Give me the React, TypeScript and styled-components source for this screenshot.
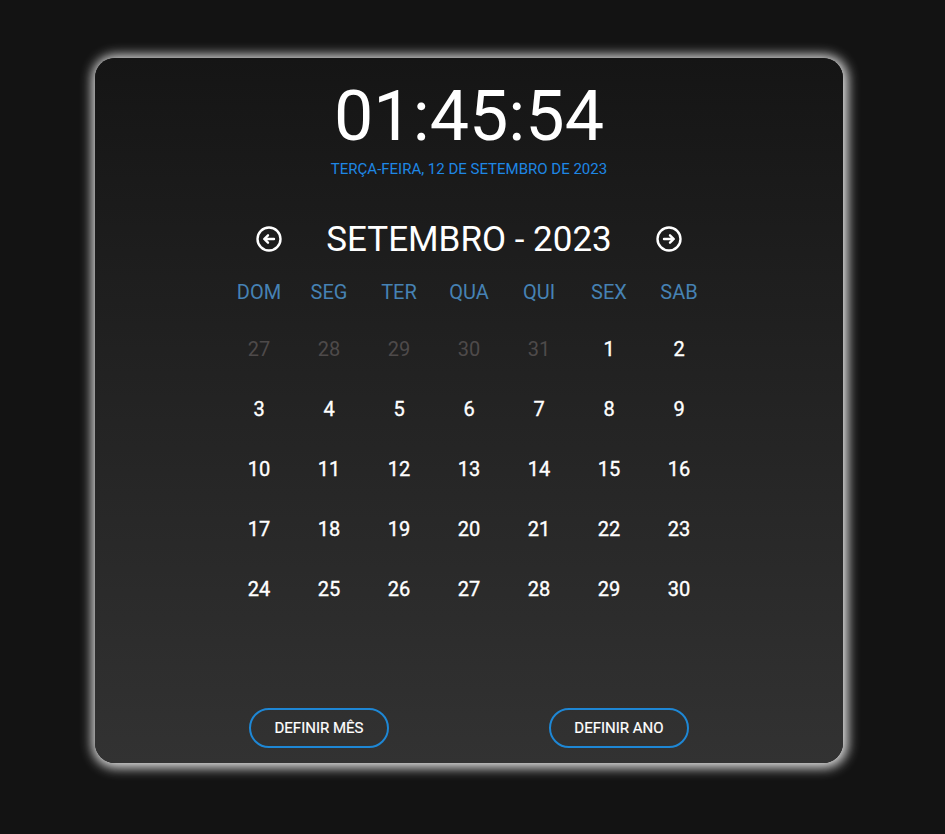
import React from 'react';
import styled, { createGlobalStyle } from 'styled-components';

const Global = createGlobalStyle`
  * { box-sizing: border-box; margin: 0; padding: 0; }
  body { background: #131313; font-family: Roboto, sans-serif; color: #fff; }
`;
const Page = styled.main`
  height: 834px;
  padding: 58px 102px 0 95px;
  overflow: hidden;
`;
const Card = styled.section`
  height: 705px;
  border-radius: 20px;
  background: linear-gradient(180deg, #151515, #323232);
  box-shadow: 1px 1px 12px 4px #ddd;
  display: flex;
  flex-direction: column;
  align-items: center;
`;
const Clock = styled.h1`
  margin-top: 16px;
  height: 84px;
  font-size: 70px;
  line-height: 84px;
  font-weight: 400;
`;
const Today = styled.p`
  margin-top: 1px;
  height: 20px;
  font-size: 15px;
  line-height: 20px;
  color: #1e87e5;
`;
const MonthBar = styled.header`
  margin-top: 40px;
  width: 428px;
  height: 40px;
  display: flex;
  align-items: center;
  justify-content: space-between;
`;
const MonthTitle = styled.h2`
  padding-top: 2px;
  font-size: 35px;
  line-height: 42px;
  font-weight: 400;
`;
const ArrowButton = styled.button`
  width: 28px;
  height: 28px;
  border: 0;
  background: none;
  color: #fff;
  display: flex;
`;
const Week = styled.div`
  margin-top: 18px;
  display: grid;
  grid-template-columns: repeat(7, 70px);
  height: 30px;
  line-height: 30px;
  font-size: 20px;
  text-align: center;
  color: #4682b4;
`;
const Days = styled.div`
  margin-top: 12px;
  display: grid;
  grid-template-columns: repeat(7, 70px);
  grid-auto-rows: 60px;
  place-items: center;
`;
const Day = styled.span<{ $muted: boolean }>`
  font-size: 20px;
  font-weight: 400;
  color: ${p => (p.$muted ? '#4e4a4a' : '#fff')};
  -webkit-text-stroke: ${p => (p.$muted ? '0' : '0.35px #fff')};
`;
const Actions = styled.footer`
  margin-top: 89px;
  width: 440px;
  display: flex;
  justify-content: space-between;
`;
const PillButton = styled.button`
  width: 140px;
  height: 40px;
  border: 2px solid #1e87d5;
  border-radius: 20px;
  background: transparent;
  color: #fff;
  font: 400 15px Roboto, sans-serif;
  -webkit-text-stroke: 0.2px #fff;
`;

const Arrow = ({ flip }: { flip?: boolean }) => (
  <svg width="28" height="28" viewBox="0 0 28 28" fill="none" stroke="currentColor" strokeWidth="2.4" strokeLinecap="round" strokeLinejoin="round">
    <g transform={flip ? 'matrix(-1 0 0 1 28 0)' : undefined}>
      <circle cx="14" cy="14" r="11.5" />
      <path d="M19 14H9.5M13 10.3l-3.8 3.7 3.8 3.7" />
    </g>
  </svg>
);

const week = ['DOM', 'SEG', 'TER', 'QUA', 'QUI', 'SEX', 'SAB'];
const days = Array.from({ length: 35 }, (_, i) => ({ muted: i < 5, n: i < 5 ? 27 + i : i - 4 }));

export default function App() {
  return (
    <Page>
      <Global />
      <Card>
        <Clock>01:45:54</Clock>
        <Today>TERÇA-FEIRA, 12 DE SETEMBRO DE 2023</Today>
        <MonthBar>
          <ArrowButton aria-label="Mês anterior"><Arrow /></ArrowButton>
          <MonthTitle>SETEMBRO - 2023</MonthTitle>
          <ArrowButton aria-label="Próximo mês"><Arrow flip /></ArrowButton>
        </MonthBar>
        <Week>{week.map(d => <span key={d}>{d}</span>)}</Week>
        <Days>{days.map((d, i) => <Day key={i} $muted={d.muted}>{d.n}</Day>)}</Days>
        <Actions>
          <PillButton>DEFINIR MÊS</PillButton>
          <PillButton>DEFINIR ANO</PillButton>
        </Actions>
      </Card>
    </Page>
  );
}
